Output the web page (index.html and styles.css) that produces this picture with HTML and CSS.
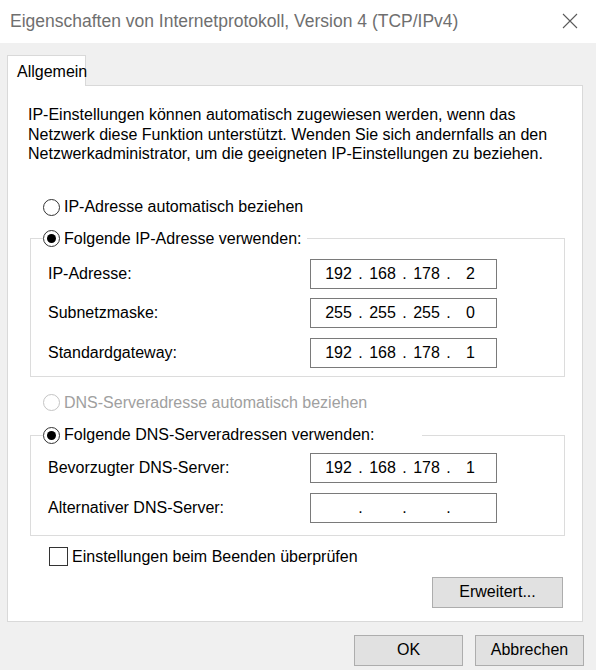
FILE: index.html
```html
<!DOCTYPE html>
<html lang="de">
<head>
<meta charset="utf-8">
<title>Eigenschaften von Internetprotokoll, Version 4 (TCP/IPv4)</title>
<link rel="stylesheet" href="styles.css">
</head>
<body>
<div class="titlebar">
  <span class="title">Eigenschaften von Internetprotokoll, Version 4 (TCP/IPv4)</span>
  <svg class="close" width="16" height="16" viewBox="0 0 16 16"><path d="M1 1 L15 15 M15 1 L1 15" stroke="#5a5a5a" stroke-width="1.1" fill="none"/></svg>
</div>
<div class="dialog">
  <div class="tabs"><div class="tab">Allgemein</div></div>
  <div class="panel">
    <p class="desc">IP-Einstellungen können automatisch zugewiesen werden, wenn das Netzwerk diese Funktion unterstützt. Wenden Sie sich andernfalls an den Netzwerkadministrator, um die geeigneten IP-Einstellungen zu beziehen.</p>

    <div class="opt opt-first"><span class="radio"></span><span>IP-Adresse automatisch beziehen</span></div>

    <fieldset class="group group-ip">
      <legend class="legend legend-ip"><span class="radio checked"></span><span>Folgende IP-Adresse verwenden:</span></legend>
      <div class="row"><span>IP-Adresse:</span><div class="ip"><span>192</span><i>.</i><span>168</span><i>.</i><span>178</span><i>.</i><span>2</span></div></div>
      <div class="row"><span>Subnetzmaske:</span><div class="ip"><span>255</span><i>.</i><span>255</span><i>.</i><span>255</span><i>.</i><span>0</span></div></div>
      <div class="row"><span>Standardgateway:</span><div class="ip"><span>192</span><i>.</i><span>168</span><i>.</i><span>178</span><i>.</i><span>1</span></div></div>
    </fieldset>

    <div class="opt opt-dns disabled"><span class="radio"></span><span>DNS-Serveradresse automatisch beziehen</span></div>

    <fieldset class="group group-dns">
      <legend class="legend legend-dns"><span class="radio checked"></span><span>Folgende DNS-Serveradressen verwenden:</span></legend>
      <div class="row"><span>Bevorzugter DNS-Server:</span><div class="ip"><span>192</span><i>.</i><span>168</span><i>.</i><span>178</span><i>.</i><span>1</span></div></div>
      <div class="row"><span>Alternativer DNS-Server:</span><div class="ip"><span></span><i>.</i><span></span><i>.</i><span></span><i>.</i><span></span></div></div>
    </fieldset>

    <div class="check"><span class="box"></span><span>Einstellungen beim Beenden überprüfen</span></div>

    <div class="adv"><button class="btn btn-adv">Erweitert...</button></div>
  </div>
  <div class="footer">
    <button class="btn btn-foot">OK</button>
    <button class="btn btn-foot">Abbrechen</button>
  </div>
</div>
</body>
</html>
```
FILE: styles.css
```css
* { box-sizing: border-box; }
html, body { margin: 0; padding: 0; }
body {
  width: 596px;
  height: 670px;
  background: #f0f0f0;
  font-family: "Liberation Sans", Arial, sans-serif;
  font-size: 16px;
  color: #000;
  overflow: hidden;
}
.titlebar {
  height: 43px;
  background: #fff;
  display: flex;
  align-items: center;
  justify-content: space-between;
  padding: 0 18px 1px 10px;
}
.title {
  font-size: 17.5px;
  color: #6f6f6f;
}
.close { display: block; }

.dialog { padding: 12px 12px 0 7px; }

.tabs { display: flex; }
.tab {
  position: relative;
  z-index: 1;
  width: 79px;
  height: 31px;
  margin-bottom: -1px;
  background: #fff;
  border: 1px solid #d9d9d9;
  border-bottom: none;
  padding: 6px 0 0 9px;
  line-height: 20px;
}
.panel {
  width: 576px;
  background: #fff;
  border: 1px solid #d9d9d9;
  padding: 19px 0 13px 0;
}
.desc {
  margin: 0 20px;
  line-height: 19.5px;
}
.opt, .legend, .check {
  display: flex;
  align-items: center;
  gap: 4px;
  height: 20px;
  line-height: 20px;
}
.opt { margin-left: 35px; }
.opt-first { margin-top: 33.5px; }
.opt-dns { margin-top: 16px; }
.disabled { color: #a0a0a0; }
.radio {
  width: 17px;
  height: 17px;
  border: 1px solid #333;
  border-radius: 50%;
  background: #fff;
  display: flex;
  align-items: center;
  justify-content: center;
  flex: none;
}
.disabled .radio { border-color: #c4c4c4; }
.radio.checked::after {
  content: "";
  width: 9px;
  height: 9px;
  border-radius: 50%;
  background: #000;
}
.group {
  margin: 0 17px 0 22px;
  border: 1px solid #dcdcdc;
  padding: 0 67px 0 17px;
  display: flex;
  flex-direction: column;
  gap: 9.5px;
}
.group-ip { margin-top: 11.5px; padding-top: 10px; padding-bottom: 8px; }
.group-dns { margin-top: 12.5px; padding-top: 8px; padding-bottom: 12px; }
.legend {
  margin-left: -5px;
  padding: 0;
}
.legend-ip { padding-right: 6px; }
.legend-dns { padding-right: 48px; }
.row {
  display: flex;
  align-items: center;
  justify-content: space-between;
  height: 30px;
}
.ip {
  width: 187px;
  height: 30px;
  border: 1px solid #7a7a7a;
  background: #fff;
  display: grid;
  grid-template-columns: 1fr 5px 1fr 5px 1fr 5px 1fr;
  align-items: center;
  padding: 0 6px 0 8px;
}
.ip span { text-align: center; }
.ip i { font-style: normal; text-align: center; }
.check {
  margin: 11px 0 0 41px;
  gap: 4px;
}
.box {
  width: 19px;
  height: 19px;
  border: 1px solid #333;
  background: #fff;
  flex: none;
}
.adv {
  display: flex;
  justify-content: flex-end;
  margin: 10px 19px 0 0;
}
.btn {
  font-family: "Liberation Sans", Arial, sans-serif;
  font-size: 16px;
  color: #000;
  background: #e1e1e1;
  border: 1px solid #adadad;
  padding: 0;
  height: 31px;
}
.btn-adv { width: 131px; }
.footer {
  display: flex;
  justify-content: flex-end;
  gap: 12px;
  margin-top: 13px;
}
.btn-foot { width: 109px; }
```
